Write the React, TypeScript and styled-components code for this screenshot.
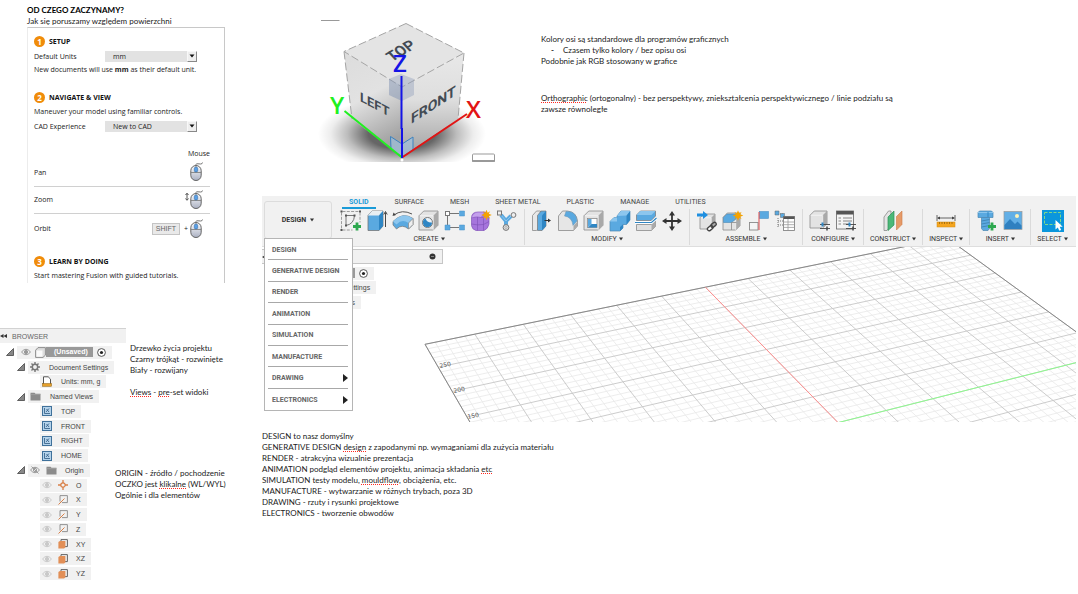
import React from "react";
import styled, { createGlobalStyle, css } from "styled-components";

const GlobalStyle = createGlobalStyle`
  * { box-sizing: border-box; }
  body { margin: 0; background: #fff; color: #222; font-family: Lato, "Liberation Sans", sans-serif; }
  h1, h2, p, ul { margin: 0; padding: 0; }
  ul { list-style: none; }
  button { border: 0; padding: 0; background: none; font: inherit; color: inherit; cursor: pointer; }
  svg { display: block; flex: none; }
`;

/* ---------- page frame ---------- */

const Page = styled.div`
  display: grid;
  grid-template-columns: 262px minmax(0, 1fr);
`;

const SideColumn = styled.aside`
  display: flex;
  flex-direction: column;
  padding-top: 5px;
`;

const MainColumn = styled.main`
  padding-right: 2px;
`;

const NoteText = styled.div<{ $indent?: number }>`
  font-size: 8px;
  line-height: 11px;
  padding-left: ${(p) => p.$indent ?? 0}px;
  white-space: nowrap;
`;

const NoteTitle = styled.h1`
  font-size: 8px;
  line-height: 11px;
  font-weight: 700;
  color: #000;
`;

const Misspelt = styled.span`
  text-decoration: underline dotted #ff2a20 1px;
  text-decoration-skip-ink: none;
  text-underline-offset: 1px;
`;

const Intro = styled.header`
  padding-left: 27px;
`;

/* ---------- setup card ---------- */

const Card = styled.section`
  margin-left: 27px;
  width: 198px;
  padding: 6px 14px 0 6px;
  border: 1px solid #c8c8c8;
  border-left-color: #ececec;
  border-bottom: 0;
  font-family: "Open Sans", "Liberation Sans", sans-serif;
  font-size: 7px;
`;

const StepTitle = styled.h2`
  display: flex;
  align-items: center;
  gap: 4px;
  height: 14px;
  margin-bottom: 1px;
  font-size: 7px;
  font-weight: 700;
  color: #111;
`;

const StepNumber = styled.span`
  display: grid;
  place-items: center;
  width: 11px;
  height: 11px;
  border-radius: 50%;
  background: #f08c0a;
  color: #fff;
  font-size: 8px;
  line-height: 11px;
`;

const Step = styled.div<{ $gap: number }>`
  margin-bottom: ${(p) => p.$gap}px;
`;

const StepLine = styled.p`
  line-height: 14px;
  white-space: nowrap;
`;

const Field = styled.div`
  display: flex;
  align-items: center;
  height: 14px;
`;

const FieldLabel = styled.label`
  width: 71px;
`;

const SelectBox = styled.div`
  position: relative;
  width: 92px;
  height: 11px;
`;

const Select = styled.select`
  appearance: none;
  display: block;
  width: 100%;
  height: 100%;
  padding: 0 8px;
  border: 0;
  border-radius: 0;
  background: #e2e2e2;
  color: #222;
  font: inherit;
`;

const SelectArrow = styled.span`
  position: absolute;
  top: 0;
  right: 0;
  display: grid;
  place-items: center;
  width: 10px;
  height: 11px;
  border: 1px solid #888;
  border-top-color: #f8f8f8;
  border-left-color: #f8f8f8;
  background: #eee;
  pointer-events: none;
`;

const ControlsTable = styled.table`
  width: 100%;
  border-collapse: collapse;
  margin-bottom: 10px;

  th { padding: 0; height: 12px; font-weight: 400; text-align: right; }
  td { padding: 0; height: 27px; border-bottom: 1px solid #d0d0d0; }
  tr:last-child td { height: 31px; border-bottom: 0; }
`;

const Gesture = styled.div`
  display: flex;
  align-items: center;
  justify-content: flex-end;
  gap: 2px;
  padding-right: 7px;
`;

const Key = styled.kbd`
  width: 28px;
  margin-right: 2px;
  border: 1px solid #c4c4c4;
  background: #e9e9e9;
  color: #666;
  font: 7px/10px "Liberation Sans", sans-serif;
  text-align: center;
`;

/* ---------- browser tree ---------- */

const BrowserBar = styled.div<{ $width: number; $framed?: boolean }>`
  display: flex;
  align-items: center;
  gap: 4px;
  width: ${(p) => p.$width}px;
  height: 15px;
  padding: 0 6px 0 0;
  background: #f1f1f1;
  border-top: 1px solid #d2d2d2;
  color: #666;
  font: 7px "Liberation Sans", sans-serif;
  ${(p) =>
    p.$framed &&
    css`
      border: 1px solid #c6c6c6;
      border-left: 0;
      & > :last-child { margin-left: auto; }
    `}
`;

const Tree = styled.ul<{ $height: number }>`
  display: grid;
  grid-auto-rows: 1fr;
  width: 115px;
  height: ${(p) => p.$height}px;
  margin-top: 2px;
  color: #444;
  font: 7px "Liberation Sans", sans-serif;
`;

const TreeRow = styled.li<{ $indent: number }>`
  display: flex;
  align-items: center;
  gap: 3px;
  padding-left: ${(p) => p.$indent}px;
`;

const Chip = styled.span<{ $gap?: number; $lead?: number }>`
  display: flex;
  align-items: center;
  gap: ${(p) => p.$gap ?? 9}px;
  height: 13px;
  padding: 0 6px 0 ${(p) => p.$lead ?? 2}px;
  background: #f1f1f1;
  white-space: nowrap;
`;

const ItemName = styled.span`
  padding-left: 2px;
`;

const RootName = styled.span`
  padding: 0 5px 0 8px;
  background: #999;
  color: #fff;
  font-weight: 700;
  line-height: 10px;
`;

const RootGroup = styled.span`
  display: flex;
  align-items: center;
`;

const TreeArea = styled.div`
  display: flex;
  align-items: flex-start;
`;

const TreeNotes = styled.div`
  display: flex;
  flex-direction: column;
  gap: 70px;
`;

const BrowserSection = styled.section`
  margin-top: 45px;
`;

/* ---------- top of the main column ---------- */

const CubeRow = styled.section`
  display: flex;
  gap: 41px;
  padding: 0 0 31px 48px;
`;

const CubeNotes = styled.div`
  display: flex;
  flex-direction: column;
  gap: 26px;
  padding-top: 34px;
`;

const Wrapped = styled(NoteText)`
  max-width: 372px;
  white-space: normal;
`;

const DashItem = styled.div`
  display: flex;
  gap: 9px;
  padding-left: 10px;
`;

/* ---------- toolbar ---------- */

const Toolbar = styled.header`
  display: flex;
  height: 51px;
  padding-left: 2px;
  border-bottom: 1px solid #dedede;
  background: #f1f1f1;
  color: #333;
  font: 7px Roboto, "Liberation Sans", sans-serif;
`;

const Workspace = styled.div`
  position: relative;
  z-index: 1;
  width: 70px;
  padding-top: 5px;
`;

const WorkspaceButton = styled.button`
  display: flex;
  align-items: center;
  justify-content: center;
  gap: 4px;
  width: 68px;
  height: 38px;
  border: 1px solid #dcdcdc;
  border-radius: 3px;
  font-weight: 700;
`;

const WorkspaceMenu = styled.ul`
  position: absolute;
  top: 42px;
  left: 0;
  display: grid;
  grid-auto-rows: 1fr;
  width: 89px;
  height: 173px;
  padding: 0 4px 0 3px;
  border: 1px solid #b5b5b5;
  background: #fff;
`;

const MenuItem = styled.li`
  display: grid;
  border-bottom: 1px solid #a8a8a8;
  &:last-child { border-bottom: 0; }
`;

const MenuButton = styled.button`
  display: flex;
  align-items: center;
  justify-content: space-between;
  padding-top: 1px;
  padding-left: 4px;
  color: #666;
  font-weight: 700;
`;

const Ribbon = styled.div`
  flex: 1;
  min-width: 0;
`;

const Tabs = styled.nav`
  display: flex;
  gap: 12px;
  height: 13px;
  padding-left: 8px;
`;

const Tab = styled.button<{ $active?: boolean }>`
  height: 13px;
  padding: 2px 7px 0;
  line-height: 9px;
  white-space: nowrap;
  border-bottom: 2px solid ${(p) => (p.$active ? "#1a9bd8" : "transparent")};
  color: ${(p) => (p.$active ? "#1a9bd8" : "#444")};
  font-weight: ${(p) => (p.$active ? 700 : 400)};
`;

const Groups = styled.div`
  display: flex;
`;

const Group = styled.div`
  display: flex;
  flex-direction: column;
  align-items: center;
  padding: 0 6px;
  border-right: 1px solid #dadada;
  &:last-child { border-right: 0; }
`;

const Tools = styled.div`
  display: flex;
  gap: 4px;
  height: 24px;
`;

const GroupButton = styled.button`
  display: flex;
  align-items: center;
  gap: 2px;
  line-height: 12px;
  white-space: nowrap;
`;

/* ---------- viewport ---------- */

const Viewport = styled.section`
  position: relative;
  height: 175px;
  padding-top: 2px;
  overflow: hidden;
`;

const GridLayer = styled.svg`
  position: absolute;
  inset: 0;
  width: 100%;
  height: 100%;
`;

const PanelLayer = styled.div`
  position: relative;
`;

const BottomNotes = styled.section`
  padding-top: 9px;
`;

/* ---------- small icons ---------- */

const Caret = () => (
  <svg width="4" height="4" viewBox="0 0 4 4"><path d="M0 .5h4L2 3.500z" fill="#333" /></svg>
);

const SelectCaret = () => (
  <svg width="6" height="4" viewBox="0 0 6 4"><path d="M.5.5h5L3 3.500z" fill="#111" /></svg>
);

const Mouse = ({ scroll }: { scroll?: boolean }) => (
  <svg width={scroll ? 18 : 13} height="20" viewBox={scroll ? "-5 0 18 20" : "0 0 13 20"} fill="none">
    <defs>
      <linearGradient id="mouseBody" x1="0" y1="0" x2="0" y2="1">
        <stop offset="0" stopColor="#fff" />
        <stop offset="1" stopColor="#aab0c2" />
      </linearGradient>
    </defs>
    <path d="M6 4V2.500Q6 1.500 8 1.800L10.500 2Q12.500 2 12.500 .5" stroke="#777" />
    <rect x=".8" y="3.500" width="10.400" height="15" rx="5.200" fill="url(#mouseBody)" stroke="#666" />
    <path d="M.8 10.500h10.400M6 4v6" stroke="#777" strokeWidth=".8" />
    <rect x="4.300" y="5" width="3.400" height="5" rx="1.600" fill="#59a0e6" stroke="#3a6ea8" strokeWidth=".6" />
    {scroll && <path d="M-3 3.500v6M-4.500 5l1.500-1.800L-1.500 5M-4.500 8.500l1.500 1.800 1.500-1.800" stroke="#444" strokeWidth=".9" />}
  </svg>
);

const Expander = () => (
  <svg width="8" height="8" viewBox="0 0 8 8"><path d="M.5 7.500h7V.5z" fill="#888" stroke="#333" strokeWidth=".7" /></svg>
);

const Eye = ({ color = "#999", off }: { color?: string; off?: boolean }) => (
  <svg width="10" height="8" viewBox="0 0 10 8" fill="none" stroke={color}>
    <path d="M.5 4Q5-1.500 9.500 4 5 9.500.5 4z" />
    <circle cx="5" cy="4" r="1.600" fill={off ? "none" : color} />
    {off && <path d="M1.500.5l7 7" />}
  </svg>
);

const Folder = () => (
  <svg width="11" height="9" viewBox="0 0 11 9"><path d="M.5 8.500V.8h4l1 1h5v6.700z" fill="#8c8c8c" /><path d="M.5 2.600h10" stroke="#aaa" strokeWidth=".6" /></svg>
);

const Gear = () => (
  <svg width="10" height="10" viewBox="0 0 10 10" fill="none" stroke="#777">
    <circle cx="5" cy="5" r="2.700" strokeWidth="1.500" />
    <path d="M5 0v2M5 8v2M0 5h2M8 5h2M1.500 1.500l1.400 1.400M7.100 7.100l1.400 1.400M8.500 1.500L7.100 2.900M2.900 7.100L1.500 8.500" strokeWidth="1.400" />
  </svg>
);

const Component = () => (
  <svg width="11" height="11" viewBox="0 0 11 11">
    <path d="M.6 3.200L3 .6h7.400v7.600L8 10.400H.6z" fill="#ddd" stroke="#777" strokeWidth=".8" />
    <rect x="1.500" y="3.500" width="6" height="6.200" fill="#fafafa" />
  </svg>
);

const Radio = () => (
  <svg width="9" height="9" viewBox="0 0 9 9"><circle cx="4.500" cy="4.500" r="3.900" fill="#fff" stroke="#444" strokeWidth=".9" /><circle cx="4.500" cy="4.500" r="1.600" fill="#222" /></svg>
);

const Units = () => (
  <svg width="10" height="11" viewBox="0 0 10 11">
    <path d="M1.500 8V.8h4.700l2.300 2.300V8" fill="#fff" stroke="#555" />
    <rect x=".4" y="7.500" width="9.200" height="2.800" fill="#e5a02c" stroke="#8b6015" strokeWidth=".5" />
  </svg>
);

const NamedView = () => (
  <svg width="10" height="10" viewBox="0 0 10 10">
    <rect x=".5" y=".5" width="9" height="9" fill="#b4d2ea" stroke="#3f719b" />
    <path d="M2.500 2v5.500H8M4 6l3-3.500M4.500 3l2.500 3" fill="none" stroke="#2c5880" strokeWidth=".8" />
  </svg>
);

const OriginPoint = () => (
  <svg width="10" height="10" viewBox="0 0 10 10" fill="none" stroke="#d98048">
    <circle cx="5" cy="5" r="2.200" strokeWidth="1.200" /><path d="M5 0v3M5 7v3M0 5h3M7 5h3" strokeWidth="1.300" />
  </svg>
);

const Axis = () => (
  <svg width="10" height="10" viewBox="0 0 10 10" fill="none">
    <path d="M2 6.500V.6h7.400v7H4" stroke="#888" strokeWidth=".9" /><path d="M.5 9.500l6-6" stroke="#d98048" />
  </svg>
);

const Plane = () => (
  <svg width="10" height="10" viewBox="0 0 10 10">
    <path d="M3 3V.6h6.400v7H7" fill="none" stroke="#555" strokeWidth=".9" /><path d="M.4 3l1.500-1h5.500v6.500L6 9.600H.4z" fill="#e28f57" />
  </svg>
);

/* ---------- toolbar icons ---------- */

const G = "#8a8a8a";
const B = "#5aa9e0";
const BD = "#2f86c4";
const BL = "#8cc6ee";

const ToolSvg = ({ children }: { children: React.ReactNode }) => (
  <svg width="22" height="22" viewBox="0 0 22 22" fill="none">{children}</svg>
);

const GreyBox = ({ x = 1, y = 1, s = 19 }: { x?: number; y?: number; s?: number }) => {
  const d = s / 4;
  return (
    <g stroke={G} strokeWidth=".8" strokeLinejoin="round">
      <path d={`M${x} ${y + d}l${d}-${d}h${s - d}v${s - d}l-${d} ${d}H${x}z`} fill="#e3e3e3" />
      <path d={`M${x + s - d} ${y + d}l${d}-${d}v${s - d}l-${d} ${d}z`} fill="#a9a9a9" stroke="none" />
      <path d={`M${x + 1} ${y + d}h${s - d - 1}v${s - d}`} stroke="#fff" strokeWidth=".6" />
    </g>
  );
};

const Plus = ({ x, y }: { x: number; y: number }) => (
  <path d={`M${x} ${y - 4}v8M${x - 4} ${y}h8`} stroke="#2ea84f" strokeWidth="2.800" />
);

const Star = ({ x, y }: { x: number; y: number }) => (
  <g transform={`translate(${x} ${y})`}>
    <path d="M0-5.300L1.200-2.200 3.700-3.700 2.200-1.200 5.300 0 2.200 1.200 3.700 3.700 1.200 2.200 0 5.300-1.200 2.200-3.700 3.700-2.200 1.200-5.300 0-2.200-1.200-3.700-3.700-1.200-2.200z" fill="#f5a300" />
  </g>
);

const ICONS: Record<string, React.ReactNode> = {
  sketch: (
    <>
      <path d="M2.500 1.500h17M1.500 2.500v17M20 2.500v10M2.500 20h10" stroke="#888" strokeDasharray="3 1.300" strokeWidth=".8" />
      <path d="M6 5.500h8.500Q14 14 6 15.500z" stroke="#777" />
      <path d="M.5.5h2v2h-2zM19 .5h2v2h-2zM.5 19h2v2h-2zM5 14.500h2v2H5zM5 4.500h2v2H5zM13.500 4.500h2v2h-2z" fill="#555" />
      <Plus x={17} y={16.500} />
    </>
  ),
  extrude: (
    <>
      <path d="M2 5.500l4-4.500h11v15l-4 4.500H2z" fill={B} stroke="#777" strokeWidth=".8" />
      <path d="M2 5.500l4-4.500h11l-4 4.500z" fill="#e8eef2" />
      <path d="M13 5.500l4-4.500v15l-4 4.500z" fill={BD} />
      <path d="M19.500 17V2.500M17.800 4.500L19.500 1.500l1.700 3" stroke="#333" strokeWidth=".9" />
    </>
  ),
  revolve: (
    <>
      <path d="M2 5Q10-1 20 4" stroke="#555" /><path d="M.5 6l1-3.500L4 5z" fill="#444" />
      <path d="M1 11.500Q11 1.500 21 8.500v6l-4.500 4.500Q10 13.500 4.500 19L1 15z" fill={B} stroke="#777" strokeWidth=".7" />
      <path d="M1 11.500Q11 1.500 21 8.500l-4.500 4.500Q10 8.500 4.500 14.500z" fill={BL} />
      <path d="M16.500 13L21 8.500v6L16.500 19z" fill="#eee" stroke="#888" strokeWidth=".7" />
    </>
  ),
  hole: (
    <>
      <GreyBox />
      <circle cx="9.500" cy="12.500" r="5" fill="#e9f2f8" stroke="#777" />
      <path d="M7.500 8.500Q9 13 14 12.500a4.500 4.500 0 1 1-6.500-4z" fill={BD} />
    </>
  ),
  pattern: (
    <>
      <path d="M3.500 6v9M6 3.500h9M6 17.500h9" stroke="#666" strokeWidth=".9" />
      <rect x="1.500" y="1.500" width="4" height="4" fill="#fff" stroke="#777" />
      <path d="M15.500 1h5v5h-5zM1 15h5v5H1zM15.500 15h5v5h-5z" fill={B} stroke="#4b93c9" strokeWidth=".5" />
    </>
  ),
  form: (
    <>
      <path d="M1.500 8Q1.500 2 8 2h7q4 1 4 6v6q-1 5-5 6.500H6q-4-1-4.500-5z" fill="#a675dc" stroke="#8556bc" strokeWidth=".7" />
      <path d="M1.500 8Q5 6 13 7.500L19 4M1.500 14q6 1.500 12 .5l5.500-3M7.500 7v13.500M13.500 7.500v13" stroke="#7c4fb5" strokeWidth=".6" />
      <path d="M2 7.500Q3 3 8 2.500h6l-3 4.500Q6 6 2 7.500z" fill="#c4a0ec" />
      <Star x={16.500} y={5} />
    </>
  ),
  rigid: (
    <>
      <path d="M5 5l5 6 5-5M10 11v6" stroke={B} strokeWidth="4" />
      <path d="M5 5l5 6 5-5" stroke={BL} strokeWidth="1" />
      <rect x="1.500" y="1" width="4" height="4" fill="#eee" stroke="#777" />
      <circle cx="17.500" cy="5" r="2.400" fill="#eee" stroke="#777" />
      <circle cx="10" cy="17.500" r="2.900" fill="#ddd" stroke="#777" />
      <circle cx="10" cy="17.500" r="1" fill="#fff" stroke="#888" strokeWidth=".6" />
    </>
  ),
  pressPull: (
    <>
      <path d="M1.500 5.500l4-4.500h4v15l-4 4.500h-4z" fill="#e8e8e8" stroke={G} strokeWidth=".8" />
      <path d="M6.500 5.500L10 1h5v15l-4 4.500H6.500z" fill={B} stroke="#777" strokeWidth=".7" />
      <path d="M11 5.500L15 1v15l-4 4.500z" fill={BD} />
      <path d="M13.500 10.500h5" stroke="#333" /><path d="M17 8.500l3 2-3 2z" fill="#333" />
    </>
  ),
  fillet: (
    <>
      <path d="M1.500 6l4-5h5q9 1 10 10v5l-4 4.500h-15z" fill="#e6e6e6" stroke={G} strokeWidth=".8" />
      <path d="M9 1.500h3Q19.500 2.500 20 11l-4 4.500Q15 7 7.500 6z" fill={B} stroke="#6b93ae" strokeWidth=".5" />
      <path d="M16.500 16l4-4.500V16l-4 4.500z" fill="#aaa" />
    </>
  ),
  shell: (
    <>
      <GreyBox />
      <rect x="4.500" y="8.500" width="9.500" height="9" fill="#fff" stroke={G} strokeWidth=".8" />
      <path d="M5 9h3.500v5L5 17.300z" fill={B} /><path d="M8.500 14H14v3.500H5z" fill={BD} />
    </>
  ),
  combine: (
    <>
      <path d="M8 6l4-5h9v9l-3.500 4.500H14V18l-3 3H1v-9.500L5 7.500h3z" fill={B} stroke="#4b88b3" strokeWidth=".7" />
      <path d="M17.500 5L21 1v9l-3.500 4.500zM11 17v4l3-3v-3.500z" fill={BD} />
      <path d="M8 6l4-5h9l-3.500 4.500zM1 11.500l4-4h3v4z" fill={BL} />
    </>
  ),
  split: (
    <>
      <path d="M1.500 5l4-4h15v5l-4 4.500h-15z" fill={B} stroke="#777" strokeWidth=".7" />
      <path d="M1.500 5l4-4h15l-4 4z" fill={BL} />
      <path d="M1.500 14.500h15l4-4.500v6.500l-4 4h-15z" fill="#e0e0e0" stroke={G} strokeWidth=".8" />
      <path d="M16.500 14.500l4-4.500v6.500l-4 4z" fill="#aaa" />
      <path d="M0 12.500h16.500L21.500 8" stroke="#fff" strokeWidth="3" />
      <path d="M0 12.500h16.500L21.500 8" stroke={BD} strokeWidth="1.200" />
    </>
  ),
  move: (
    <>
      <path d="M11 3v16M3 11h16" stroke="#333" strokeWidth="1.800" />
      <path d="M11 1l3 4.500H8zM11 21l3-4.500H8zM1 11l4.500-3v6zM21 11l-4.500-3v6z" fill="#333" />
    </>
  ),
  insertLink: (
    <>
      <GreyBox x={4} y={4} s={15} />
      <path d="M1 3.500h6V1l5 4-5 4V6.500H1z" fill="#1f8fe0" />
      <g stroke="#444" strokeWidth="1.400"><rect x="11" y="16.500" width="6" height="3.500" rx="1.700" fill="#fff" transform="rotate(-40 14 18)" /><rect x="14.500" y="13.500" width="6" height="3.500" rx="1.700" transform="rotate(-40 17 15)" /></g>
    </>
  ),
  newComponent: (
    <>
      <GreyBox x={1} y={3} s={17} />
      <path d="M1.500 7.500L5 4h9v5l-4.500 3.500h-8z" fill={B} stroke="#4b88b3" strokeWidth=".6" />
      <path d="M9.500 12v8M9.500 12.500h5" stroke={G} strokeWidth=".8" />
      <Star x={16} y={5.500} />
    </>
  ),
  joint: (
    <>
      <rect x="11.500" y="1.500" width="9" height="7" fill={B} stroke="#4b93c9" strokeWidth=".6" />
      <rect x="1.500" y="12.500" width="8.500" height="7.500" fill="#f5f5f5" stroke={G} strokeWidth=".9" />
      <path d="M11 2v18" stroke="#e04848" />
    </>
  ),
  table: (
    <>
      <path d="M4 8v9M4 11h6M4 15h6M4 4h6" stroke="#777" strokeDasharray="1 1" />
      <path d="M1 1h4v4H1zM6.500 3.500h4v4h-4z" fill={B} stroke="#666" strokeWidth=".5" />
      <rect x="9.500" y="6.500" width="11" height="14" fill="#fff" stroke="#777" strokeWidth=".8" />
      <path d="M9.500 6.500h11v2.500h-11z" fill="#555" />
      <path d="M10 12h10M10 14.700h10M10 17.400h10M14 9v11" stroke="#999" strokeWidth=".8" />
    </>
  ),
  configure: (
    <>
      <GreyBox x={1} y={1} s={17} />
      <path d="M11 14.500h10M11 18.500h10" stroke="#444" strokeWidth=".9" /><path d="M13.500 12.500v4" stroke={BD} strokeWidth="2" /><path d="M18 16.500v4" stroke="#444" strokeWidth="1.500" />
    </>
  ),
  configTable: (
    <>
      <rect x="1.500" y="1" width="17" height="18" fill="#f4f4f4" stroke="#777" strokeWidth=".9" />
      <path d="M1.500 1h17v3.500h-17z" fill="#555" />
      <path d="M3.500 8h2.500M3.500 11h2.500M3.500 14h2.500M8 8h9M8 11h9M8 14h6" stroke="#aaa" strokeWidth="1.400" />
      <path d="M11 14.500h10M11 18.500h10" stroke="#444" strokeWidth=".9" /><path d="M14.500 12.500v4" stroke={BD} strokeWidth="2" /><path d="M18 16.500v4" stroke="#444" strokeWidth="1.500" />
    </>
  ),
  construct: (
    <>
      <path d="M2 7l4.500-6H9v14L5 20.500H2z" fill="#e4e4e4" stroke={G} strokeWidth=".8" />
      <path d="M6 7l6-6v14l-6 5.500z" fill="#4cb878" stroke="#2e8f57" strokeWidth=".7" />
      <path d="M14.500 6.500L20 1v13.500l-5.500 5.500z" fill="#e69a68" stroke="#cf7b44" strokeWidth=".6" />
    </>
  ),
  measure: (
    <>
      <path d="M2 5v6M20 5v6M3 8h16" stroke="#555" strokeWidth=".9" />
      <path d="M2 8l3-1.500v3zM20 8l-3-1.500v3z" fill="#444" />
      <rect x="2" y="12" width="18" height="5" fill="#f5a51e" stroke="#d48c10" strokeWidth=".5" />
      <path d="M4.500 12v2M7 12v2M9.500 12v2M12 12v2M14.500 12v2M17 12v2" stroke="#8a5a08" strokeWidth=".7" />
    </>
  ),
  bolt: (
    <>
      <path d="M2 2.500l1.500-1.500h12L17 2.500v5H2z" fill={B} stroke="#4a86b2" strokeWidth=".7" />
      <path d="M2 2.500h15" stroke={BL} /><path d="M12 2v5" stroke={BD} />
      <path d="M5.500 7.500h8v11L12 20.500H7l-1.500-2z" fill={B} stroke="#4a86b2" strokeWidth=".7" />
      <path d="M5.500 11l8-1.500M5.500 14l8-1.500M5.500 17l8-1.500" stroke="#3b7fae" strokeWidth=".8" />
      <Plus x={16} y={16.500} />
    </>
  ),
  image: (
    <>
      <rect x="2" y="1.500" width="18" height="18" fill="#62afe6" stroke="#999" strokeWidth=".7" />
      <path d="M2.500 15l5.500-6 5 5 2.500-2.500 4 4V19h-17z" fill="#2f80c0" />
      <circle cx="15" cy="6" r="2" fill="#fff3b8" />
    </>
  ),
  select: (
    <>
      <rect x="0" y="0" width="22" height="22" fill="#0a96dc" />
      <rect x="2.500" y="2.500" width="16" height="12" stroke="#7fd88a" strokeDasharray="3 1.500" />
      <path d="M13.500 10v9.500l2.300-2 1.500 3.300 1.900-.9-1.500-3.200h3z" fill="#fff" />
    </>
  ),
};

const TOOL_GROUPS = [
  { name: "CREATE", tools: ["sketch", "extrude", "revolve", "hole", "pattern", "form", "rigid"] },
  { name: "MODIFY", tools: ["pressPull", "fillet", "shell", "combine", "split", "move"] },
  { name: "ASSEMBLE", tools: ["insertLink", "newComponent", "joint", "table"] },
  { name: "CONFIGURE", tools: ["configure", "configTable"] },
  { name: "CONSTRUCT", tools: ["construct"] },
  { name: "INSPECT", tools: ["measure"] },
  { name: "INSERT", tools: ["bolt", "image"] },
  { name: "SELECT", tools: ["select"] },
];

const TABS = ["SOLID", "SURFACE", "MESH", "SHEET METAL", "PLASTIC", "MANAGE", "UTILITIES"];

const WORKSPACES = ["DESIGN", "GENERATIVE DESIGN", "RENDER", "ANIMATION", "SIMULATION", "MANUFACTURE", "DRAWING", "ELECTRONICS"];

/* ---------- drawings ---------- */

const ViewCube = () => (
  <svg width="190" height="165" viewBox="310 0 190 165" fontFamily="Roboto, 'Liberation Sans', sans-serif">
    <defs>
      <radialGradient id="shadow">
        <stop offset="0.4" stopColor="#000" stopOpacity=".6" />
        <stop offset=".65" stopColor="#000" stopOpacity=".26" />
        <stop offset=".85" stopColor="#000" stopOpacity=".07" />
        <stop offset="1" stopColor="#000" stopOpacity="0" />
      </radialGradient>
      <linearGradient id="leftFace" x1="0" y1="0" x2=".3" y2="1">
        <stop offset="0" stopColor="#dcdcdc" /><stop offset=".5" stopColor="#e2e2e2" /><stop offset="1" stopColor="#a2a2a2" />
      </linearGradient>
      <linearGradient id="frontFace" x1="0" y1="0" x2="0" y2="1">
        <stop offset="0" stopColor="#e8e8e8" /><stop offset=".45" stopColor="#dedede" /><stop offset="1" stopColor="#a0a0a0" />
      </linearGradient>
      <clipPath id="shadowClip"><rect x="310" y="80" width="190" height="82" /></clipPath>
    </defs>
    <ellipse cx="402" cy="134" rx="84" ry="38" fill="url(#shadow)" clipPath="url(#shadowClip)" />
    <path d="M321 20.500h18.500" stroke="#999" />
    <path d="M406 23.500L464 53l-62 34-58-35.500z" fill="#e4e4e4" />
    <path d="M344 51.500L402 87v70l-50-38z" fill="url(#leftFace)" />
    <path d="M464 53l-62 34v70l56-38z" fill="url(#frontFace)" />
    <g fill="none" stroke="#a4a4a4" strokeDasharray="8 3">
      <path d="M406 23.500L464 53l-62 34-58-35.500z" /><path d="M344 51.500l8 67.500M464 53l-6 66" />
    </g>
    <g fontWeight="700" fill="#434b54">
      <text transform="translate(392 62) rotate(-31) skewX(12)" fontSize="15">TOP</text>
      <text transform="translate(360 101) skewY(28)" fontSize="13">LEFT</text>
      <text transform="translate(411 124) skewY(-33)" fontSize="14">FRONT</text>
    </g>
    <path d="M389 79l12-5 13 5v16l-12 6-13-6z" fill="#8b9bb8" fillOpacity=".4" />
    <path d="M389 79l13 7v15l-13-6z" fill="#7f8fae" fillOpacity=".2" />
    <path d="M390.500 136.500L402 144l11-7v12.500L402 157l-11-8z" fill="#9dc4e6" fillOpacity=".6" stroke="#3c82bf" />
    <path d="M344.500 111L402 157.500" stroke="#20f020" strokeWidth="2" />
    <path d="M402 157.500L467 114" stroke="#e21414" strokeWidth="2" />
    <path d="M401.500 76v53M402 128v30" stroke="#1414e6" strokeWidth="2" />
    <circle cx="402" cy="160" r="1.500" fill="#fff" />
    <g fontFamily="'Open Sans', sans-serif" fontSize="24" fontWeight="600">
      <text x="330" y="114" fill="#20f020">Y</text>
      <text x="466" y="118" fill="#e21414">X</text>
      <text x="393" y="72" fill="#1414e6">Z</text>
    </g>
    <rect x="472.500" y="154" width="22" height="7" rx="1" fill="#fff" stroke="#999" />
    <path d="M472 161h23" stroke="#888" strokeWidth="1.500" />
  </svg>
);

/* Perspective projection of a point on the ground grid (in major cells). */
const project = (i: number, j: number): [number, number] => {
  const w = 0.01338 * i - 0.02664 * j + 1;
  return [(56.17 * i + 1.559 * j + 425) / w, (-5.674 * i + 13.12 * j + 344.3) / w];
};

const segment = (a: [number, number], b: [number, number]) => {
  const [x1, y1] = project(...a);
  const [x2, y2] = project(...b);
  return `M${x1.toFixed(1)} ${y1.toFixed(1)}L${x2.toFixed(1)} ${y2.toFixed(1)}`;
};

const steps = Array.from({ length: 61 }, (_, n) => n / 5);
const isMajor = (n: number) => Number.isInteger(n);
const gridLines = (keep: (n: number) => boolean) =>
  steps.filter(keep).map((n) => segment([n, 0], [n, 12]) + segment([0, n], [12, n])).join("");

const GroundGrid = () => (
  <GridLayer viewBox="262 247 814 175" preserveAspectRatio="xMinYMin slice" fill="none">
    <path d={gridLines((n) => !isMajor(n))} stroke="#e8e8e8" strokeWidth=".8" />
    <path d={gridLines(isMajor)} stroke="#c6c6c6" strokeWidth=".9" />
    <path d={segment([0, 0], [12, 0]) + segment([0, 0], [0, 12]) + segment([12, 0], [12, 12])} stroke="#888" />
    <path d={segment([6, 0], [6, 6])} stroke="#ff8f8f" />
    <path d={segment([6, 6], [12, 6])} stroke="#8dfa8d" />
    <g fill="#555" fontFamily="'DejaVu Sans', sans-serif" fontSize="6">
      <text transform="translate(440 368) rotate(-12)">250</text>
      <text transform="translate(454 393) rotate(-12)">200</text>
      <text transform="translate(468 419) rotate(-12)">150</text>
    </g>
  </GridLayer>
);

/* ---------- composed parts ---------- */

const Collapse = () => (
  <svg width="8" height="6" viewBox="0 0 8 6"><path d="M3.500 1v4L0 3zM7 1v4L3.500 3z" fill="#333" /></svg>
);

const RootRow = () => (
  <TreeRow $indent={6}>
    <Expander />
    <Chip $lead={4} $gap={4}>
      <Eye />
      <RootGroup><Component /><RootName>(Unsaved)</RootName></RootGroup>
      <Radio />
    </Chip>
  </TreeRow>
);

const BranchRow = ({ icon, label }: { icon: React.ReactNode; label: string }) => (
  <TreeRow $indent={17}>
    <Expander />
    <Chip>{icon}{label}</Chip>
  </TreeRow>
);

const ORIGIN_ITEMS: [string, React.ReactNode][] = [
  ["O", <OriginPoint />],
  ["X", <Axis />],
  ["Y", <Axis />],
  ["Z", <Axis />],
  ["XY", <Plane />],
  ["XZ", <Plane />],
  ["YZ", <Plane />],
];

const BrowserTree = () => (
  <Tree $height={236}>
    <RootRow />
    <BranchRow icon={<Gear />} label="Document Settings" />
    <TreeRow $indent={40}><Chip><Units />Units: mm, g</Chip></TreeRow>
    <BranchRow icon={<Folder />} label="Named Views" />
    {["TOP", "FRONT", "RIGHT", "HOME"].map((view) => (
      <TreeRow $indent={40} key={view}><Chip><NamedView />{view}</Chip></TreeRow>
    ))}
    <TreeRow $indent={17}>
      <Expander />
      <Chip $gap={6}><Eye off /><Folder /><ItemName>Origin</ItemName></Chip>
    </TreeRow>
    {ORIGIN_ITEMS.map(([name, icon]) => (
      <TreeRow $indent={40} key={name}>
        <Chip $gap={6}><Eye color="#c9c9c9" />{icon}<ItemName>{name}</ItemName></Chip>
      </TreeRow>
    ))}
  </Tree>
);

const SetupCard = () => (
  <Card>
    <Step $gap={13}>
      <StepTitle><StepNumber>1</StepNumber>SETUP</StepTitle>
      <Field>
        <FieldLabel htmlFor="units">Default Units</FieldLabel>
        <SelectBox>
          <Select id="units"><option>mm</option></Select>
          <SelectArrow><SelectCaret /></SelectArrow>
        </SelectBox>
      </Field>
      <StepLine>New documents will use <b>mm</b> as their default unit.</StepLine>
    </Step>
    <Step $gap={14}>
      <StepTitle><StepNumber>2</StepNumber>NAVIGATE &amp; VIEW</StepTitle>
      <StepLine>Maneuver your model using familiar controls.</StepLine>
      <Field>
        <FieldLabel htmlFor="cad">CAD Experience</FieldLabel>
        <SelectBox>
          <Select id="cad"><option>New to CAD</option></Select>
          <SelectArrow><SelectCaret /></SelectArrow>
        </SelectBox>
      </Field>
    </Step>
    <ControlsTable>
      <thead><tr><th /><th>Mouse</th></tr></thead>
      <tbody>
        <tr><td>Pan</td><td><Gesture><Mouse /></Gesture></td></tr>
        <tr><td>Zoom</td><td><Gesture><Mouse scroll /></Gesture></td></tr>
        <tr><td>Orbit</td><td><Gesture><Key>SHIFT</Key>+<Mouse /></Gesture></td></tr>
      </tbody>
    </ControlsTable>
    <StepTitle><StepNumber>3</StepNumber>LEARN BY DOING</StepTitle>
    <StepLine>Start mastering Fusion with guided tutorials.</StepLine>
  </Card>
);

const AppToolbar = () => (
  <Toolbar>
    <Workspace>
      <WorkspaceButton>DESIGN <Caret /></WorkspaceButton>
      <WorkspaceMenu>
        {WORKSPACES.map((name) => (
          <MenuItem key={name}>
            <MenuButton>
              {name}
              {(name === "DRAWING" || name === "ELECTRONICS") && (
                <svg width="5" height="8" viewBox="0 0 5 8"><path d="M0 0l5 4-5 4z" fill="#222" /></svg>
              )}
            </MenuButton>
          </MenuItem>
        ))}
      </WorkspaceMenu>
    </Workspace>
    <Ribbon>
      <Tabs>
        {TABS.map((tab) => <Tab key={tab} $active={tab === "SOLID"}>{tab}</Tab>)}
      </Tabs>
      <Groups>
        {TOOL_GROUPS.map((group) => (
          <Group key={group.name}>
            <Tools>
              {group.tools.map((tool) => (
                <button key={tool} aria-label={tool}><ToolSvg>{ICONS[tool]}</ToolSvg></button>
              ))}
            </Tools>
            <GroupButton>{group.name}<Caret /></GroupButton>
          </Group>
        ))}
      </Groups>
    </Ribbon>
  </Toolbar>
);

export default function App() {
  return (
    <>
      <GlobalStyle />
      <Page>
        <SideColumn>
          <Intro>
            <NoteTitle>OD CZEGO ZACZYNAMY?</NoteTitle>
            <NoteText>Jak się poruszamy względem powierzchni</NoteText>
          </Intro>
          <SetupCard />
          <BrowserSection>
            <BrowserBar $width={126}><Collapse />BROWSER</BrowserBar>
            <TreeArea>
              <BrowserTree />
              <TreeNotes>
                <NoteText $indent={15}>
                  Drzewko życia projektu<br />
                  Czarny trójkąt - rozwinięte<br />
                  Biały - rozwijany<br />
                  <br />
                  <Misspelt>Views</Misspelt> - <Misspelt>pre</Misspelt>-set widoki
                </NoteText>
                <NoteText>
                  ORIGIN - źródło / pochodzenie<br />
                  OCZKO jest <Misspelt>klikalne</Misspelt> (WL/WYL)<br />
                  Ogólnie i dla elementów
                </NoteText>
              </TreeNotes>
            </TreeArea>
          </BrowserSection>
        </SideColumn>
        <MainColumn>
          <CubeRow>
            <ViewCube />
            <CubeNotes>
              <NoteText>
                Kolory osi są standardowe dla programów graficznych
                <DashItem><b>-</b><span>Czasem tylko kolory / bez opisu osi</span></DashItem>
                Podobnie jak RGB stosowany w grafice
              </NoteText>
              <Wrapped>
                <Misspelt>Orthographic</Misspelt> (ortogonalny) - bez perspektywy, zniekształcenia perspektywicznego / linie podziału są zawsze równoległe
              </Wrapped>
            </CubeNotes>
          </CubeRow>
          <AppToolbar />
          <Viewport>
            <GroundGrid />
            <PanelLayer>
              <BrowserBar $width={181} $framed>
                <Collapse />BROWSER
                <svg width="7" height="7" viewBox="0 0 7 7"><circle cx="3.500" cy="3.500" r="3" fill="#333" /><path d="M2 3.500h3" stroke="#999" strokeWidth=".8" /></svg>
              </BrowserBar>
              <Tree $height={44}>
                <RootRow />
                <BranchRow icon={<Gear />} label="Document Settings" />
                <BranchRow icon={<Folder />} label="Named Views" />
              </Tree>
            </PanelLayer>
          </Viewport>
          <BottomNotes>
            <NoteText>
              DESIGN to nasz domyślny<br />
              GENERATIVE DESIGN <Misspelt>design</Misspelt> z zapodanymi np. wymaganiami dla zużycia materiału<br />
              RENDER - atrakcyjna wizualnie prezentacja<br />
              ANIMATION podgląd elementów projektu, animacja składania <Misspelt>etc</Misspelt><br />
              SIMULATION testy modelu, <Misspelt>mouldflow</Misspelt>, obciążenia, etc.<br />
              MANUFACTURE - wytwarzanie w różnych trybach, poza 3D<br />
              DRAWING - rzuty i rysunki projektowe<br />
              ELECTRONICS - tworzenie obwodów
            </NoteText>
          </BottomNotes>
        </MainColumn>
      </Page>
    </>
  );
}
